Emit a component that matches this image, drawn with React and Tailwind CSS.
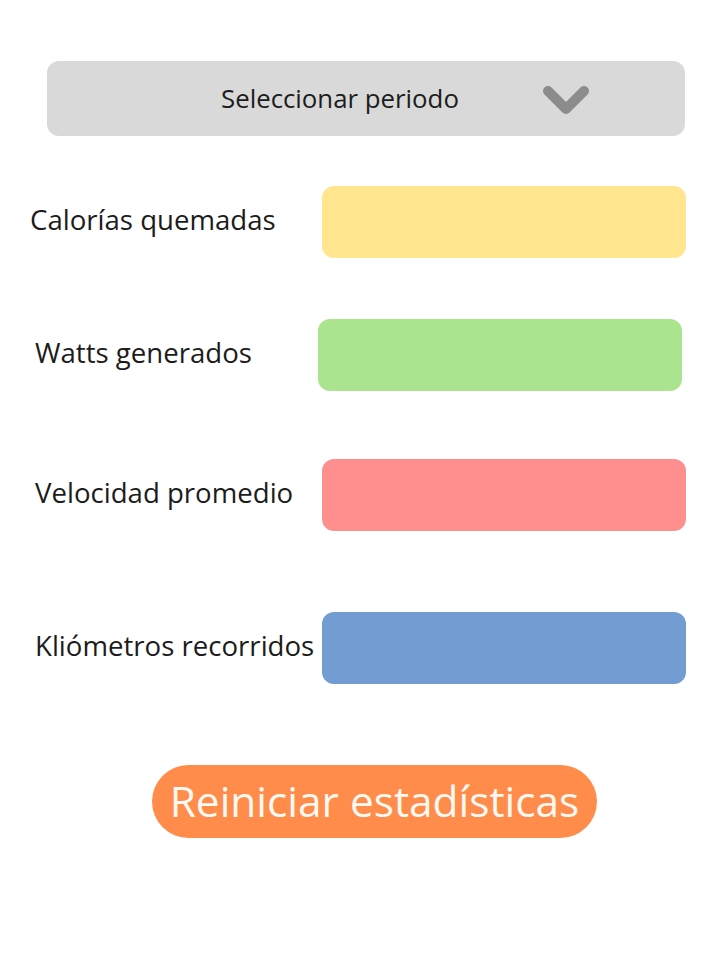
const stats = [
  { label: "Calorías quemadas", color: "bg-[#ffe68f]", labelPad: "pl-[30px]", boxClass: "ml-[322px] mr-[35px]", gap: "mt-[50px]" },
  { label: "Watts generados", color: "bg-[#abe48f]", labelPad: "pl-[35px]", boxClass: "ml-[318px] mr-[39px]", gap: "mt-[61px]" },
  { label: "Velocidad promedio", color: "bg-[#ff8f8f]", labelPad: "pl-[35px]", boxClass: "ml-[322px] mr-[35px]", gap: "mt-[68px]" },
  { label: "Kliómetros recorridos", color: "bg-[#739dd2]", labelPad: "pl-[35px]", boxClass: "ml-[322px] mr-[35px]", gap: "mt-[81px]" },
];

const Chevron = () => (
  <svg width="50" height="32" viewBox="0 0 50 32" fill="none">
    <polyline
      points="7,7 25,25 43,7"
      stroke="#8c8c8c"
      strokeWidth="10"
      strokeLinecap="round"
      strokeLinejoin="round"
    />
  </svg>
);

export default function App() {
  return (
    <div className="relative flex min-h-[965px] w-full flex-col bg-white pt-[61px] font-['Open_Sans',sans-serif] text-[#1c1c1c]">
      <button className="mx-[36px] ml-[47px] flex h-[75px] items-center rounded-[12px] bg-[#d9d9d9] pl-[174px] text-left">
        <span className="text-[25.8px] leading-none">Seleccionar periodo</span>
        <span className="ml-[82px] mt-[2px] flex">
          <Chevron />
        </span>
      </button>

      {stats.map((s) => (
        <div key={s.label} className={`relative flex items-center ${s.gap}`}>
          <span className={`absolute left-0 -translate-y-[2px] text-[27.6px] leading-none whitespace-nowrap ${s.labelPad}`}>
            {s.label}
          </span>
          <div className={`h-[72px] flex-1 rounded-[12px] ${s.color} ${s.boxClass}`} />
        </div>
      ))}

      <div className="mt-[81px] flex">
        <button className="ml-[152px] flex h-[73px] w-[445px] items-center justify-center rounded-full bg-[#ff8c4a] text-[42.4px] leading-none text-[#fff9f2]">
          Reiniciar estadísticas
        </button>
      </div>
    </div>
  );
}
